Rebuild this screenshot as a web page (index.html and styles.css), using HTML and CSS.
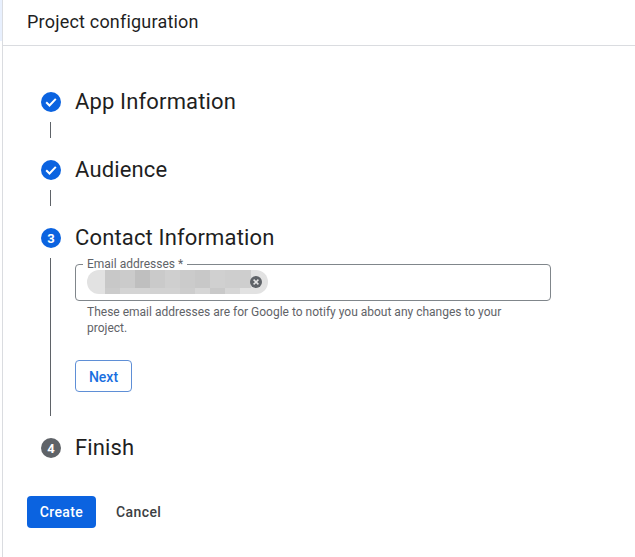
FILE: index.html
```html
<!DOCTYPE html>
<html lang="en">
<head>
    <meta charset="UTF-8">
    <title>Project configuration</title>
    <link rel="stylesheet" href="styles.css">
</head>
<body>
    <div class="sidenav"></div>
    <main class="panel">
        <header class="panel-header">Project configuration</header>

        <div class="stepper">
            <section class="step">
                <div class="step-head">
                    <svg class="step-icon" viewBox="0 0 20 20"><circle cx="10" cy="10" r="10" fill="#0b63e0"/><path d="M5.2 10.3l3.3 3.2 6.3-6.6" fill="none" stroke="#fff" stroke-width="2"/></svg>
                    <h2 class="step-title">App Information</h2>
                </div>
                <div class="step-line"></div>
            </section>

            <section class="step">
                <div class="step-head">
                    <svg class="step-icon" viewBox="0 0 20 20"><circle cx="10" cy="10" r="10" fill="#0b63e0"/><path d="M5.2 10.3l3.3 3.2 6.3-6.6" fill="none" stroke="#fff" stroke-width="2"/></svg>
                    <h2 class="step-title">Audience</h2>
                </div>
                <div class="step-line"></div>
            </section>

            <section class="step">
                <div class="step-head">
                    <span class="step-number">3</span>
                    <h2 class="step-title">Contact Information</h2>
                </div>
                <div class="step-line step-content">
                    <fieldset class="field">
                        <legend class="field-label">Email addresses *</legend>
                        <div class="chip">
                            <!-- the address is pixelated out in the original -->
                            <svg class="chip-mosaic" viewBox="0 0 181 24">
                                <rect x="18" y="0" width="15" height="18" fill="#c8c8c8"/>
                                <rect x="33" y="0" width="15" height="18" fill="#cbcbcb"/>
                                <rect x="48" y="0" width="15" height="18" fill="#bfbfbf"/>
                                <rect x="63" y="0" width="15" height="18" fill="#cacaca"/>
                                <rect x="78" y="0" width="15" height="18" fill="#cfcfcf"/>
                                <rect x="93" y="0" width="15" height="18" fill="#cbcbcb"/>
                                <rect x="108" y="0" width="15" height="18" fill="#c8c8c8"/>
                                <rect x="123" y="0" width="15" height="18" fill="#d0d0d0"/>
                                <rect x="138" y="0" width="26" height="18" fill="#cecece"/>
                                <rect x="18" y="18" width="15" height="6" fill="#cbcbcb"/>
                                <rect x="33" y="18" width="30" height="6" fill="#d4d4d4"/>
                                <rect x="63" y="18" width="30" height="6" fill="#d2d2d2"/>
                                <rect x="93" y="18" width="15" height="6" fill="#cdcdcd"/>
                                <rect x="108" y="18" width="15" height="6" fill="#d6d6d6"/>
                                <rect x="123" y="18" width="15" height="6" fill="#c9c9c9"/>
                                <rect x="138" y="18" width="15" height="6" fill="#d6d6d6"/>
                            </svg>
                            <svg class="chip-remove" viewBox="0 0 12 12"><circle cx="6" cy="6" r="6" fill="#5f6368"/><path d="M3.6 3.6l4.8 4.8M8.4 3.6l-4.8 4.8" stroke="#e4e4e4" stroke-width="1.5"/></svg>
                        </div>
                    </fieldset>
                    <p class="field-hint">These email addresses are for Google to notify you about any changes to your project.</p>
                    <button class="btn-next">Next</button>
                </div>
            </section>

            <section class="step">
                <div class="step-head">
                    <span class="step-number step-number-todo">4</span>
                    <h2 class="step-title">Finish</h2>
                </div>
            </section>
        </div>

        <div class="actions">
            <button class="btn-create">Create</button>
            <button class="btn-cancel">Cancel</button>
        </div>
    </main>
</body>
</html>
```

FILE: styles.css
```css
html, body {
    height: 100%;
}

body {
    margin: 0;
    display: flex;
    background-color: #ffffff;
    color: #1f1f1f;
    font-family: Roboto, "Liberation Sans", sans-serif;
    overflow: hidden;
}

.sidenav {
    width: 2px;
    height: 41px;
    background-color: #e8f0fe;
    flex: none;
}

.panel {
    flex: 1;
    border-left: 1px solid #dadce0;
    min-width: 0;
}

.panel-header {
    height: 33px;
    padding: 12px 0 0 24px;
    font-size: 18px;
    letter-spacing: 0.2px;
    line-height: 20px;
    border-bottom: 1px solid #dadce0;
}

.stepper {
    padding: 44px 0 0 38px;
}

.step-head {
    display: flex;
    align-items: center;
    gap: 14px;
    height: 24px;
}

.step-icon {
    width: 20px;
    height: 20px;
    flex: none;
}

.step-number {
    width: 20px;
    height: 20px;
    flex: none;
    border-radius: 50%;
    background-color: #0b63e0;
    color: #ffffff;
    font-size: 13px;
    font-weight: 700;
    line-height: 21px;
    text-align: center;
}

.step-number-todo {
    background-color: #5f6368;
}

.step-title {
    margin: 0;
    font-size: 22px;
    font-weight: 400;
    letter-spacing: 0.15px;
    line-height: 24px;
}

.step-line {
    margin: 8px 0 20px 9px;
    height: 16px;
    border-left: 1px solid #5f6368;
}

.step-content {
    height: 158px;
    padding-left: 24px;
}

.field {
    margin: 0;
    padding: 0 0 0 7px;
    width: 476px;
    height: 43px;
    box-sizing: border-box;
    border: 1px solid #80868b;
    border-radius: 4px;
}

.field-label {
    padding: 0 4px;
    font-size: 12px;
    line-height: 12px;
    color: #5f6368;
}

.chip {
    position: relative;
    width: 181px;
    height: 24px;
    margin-left: 4px;
    border-radius: 12px;
    background-color: #e2e2e2;
    overflow: hidden;
}

.chip-mosaic {
    display: block;
    width: 181px;
    height: 24px;
    filter: blur(0.5px);
}

.chip-remove {
    position: absolute;
    right: 6px;
    top: 6px;
    width: 12px;
    height: 12px;
}

.field-hint {
    margin: 3px 0 0 12px;
    width: 430px;
    font-size: 12px;
    line-height: 16px;
    color: #5f6368;
}

.btn-next {
    display: block;
    margin-top: 24px;
    width: 57px;
    height: 32px;
    padding: 1px 0 0;
    background-color: #ffffff;
    border: 1px solid #5f8fd6;
    border-radius: 4px;
    color: #1a6fe0;
    font-family: inherit;
    font-size: 14px;
    font-weight: 500;
}

.actions {
    display: flex;
    margin: 36px 0 0 24px;
}

.btn-create {
    width: 69px;
    height: 32px;
    padding: 0;
    background-color: #0b63e0;
    border: none;
    border-radius: 4px;
    color: #ffffff;
    font-family: inherit;
    font-size: 14px;
    font-weight: 500;
    letter-spacing: 0.4px;
}

.btn-cancel {
    margin-left: 20px;
    padding: 0;
    background: none;
    border: none;
    color: #3c4043;
    font-family: inherit;
    font-size: 14px;
    font-weight: 500;
    letter-spacing: 0.4px;
}
```
